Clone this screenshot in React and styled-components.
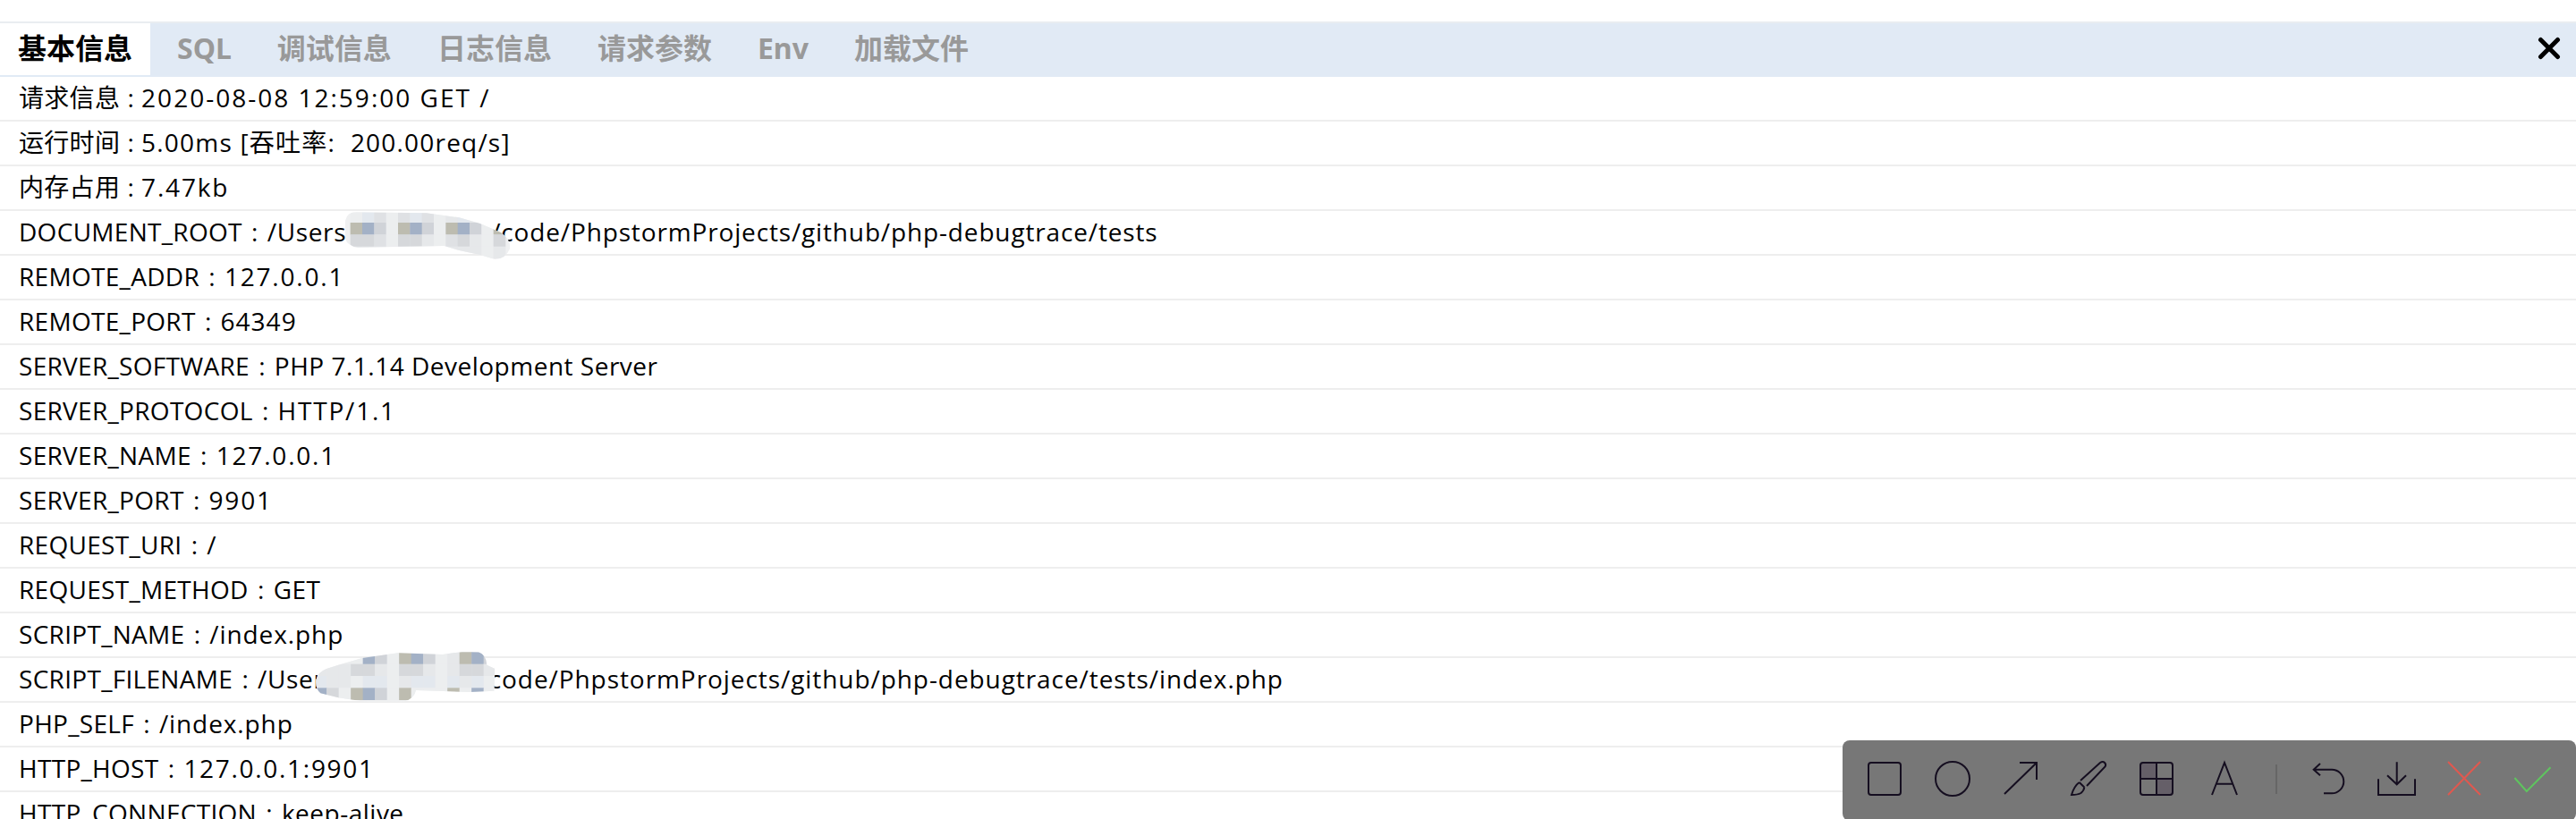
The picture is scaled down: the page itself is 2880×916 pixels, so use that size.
import React from 'react';
import styled, { createGlobalStyle } from 'styled-components';

const Global = createGlobalStyle`
  html, body { margin: 0; padding: 0; background: #fff; overflow: hidden; }
  #root { height: 916px; overflow: hidden; position: relative; }
`;
const Page = styled.div`
  padding-top: 24px;
  font-family: "Open Sans", "Noto Sans CJK SC", sans-serif;
  color: #000;
`;
const TabBar = styled.div`
  display: flex;
  align-items: stretch;
  height: 62px;
  box-sizing: border-box;
  border-top: 2px solid #e9edf1;
  border-bottom: 2px solid #e1eaf5;
  background: #e1eaf5;
`;
const Tab = styled.div`
  padding: 0 20px 3px 20px;
  margin-right: ${p => (p.$active ? 10 : 11)}px;
  display: flex;
  align-items: center;
  font-family: "Noto Sans", "Noto Sans CJK SC", sans-serif;
  font-size: 32px;
  font-weight: 700;
  line-height: 1;
  color: ${p => (p.$active ? '#000' : '#999')};
  background: ${p => (p.$active ? '#fff' : 'transparent')};
`;
const Close = styled.svg`
  margin-left: auto;
  margin-right: 16px;
  align-self: center;
  width: 28px;
  height: 28px;
`;
const Row = styled.div`
  height: 50px;
  box-sizing: border-box;
  padding-left: 21px;
  border-bottom: 2px solid #eee;
  font-size: 28px;
  line-height: 46px;
  white-space: pre;
`;
const Key = styled.span`
  letter-spacing: 0.3px;
`;
const Colon = styled.span`
  margin: 0 ${p => (p.$cjk ? 1 : 3)}px;
`;
const Value = styled.span`
  letter-spacing: ${p => p.$ls}px;
`;
const Redacted = styled.span`
  display: inline-block;
  width: ${p => p.$w}px;
`;
const Smudge = styled.svg`
  position: absolute;
  left: ${p => p.$x}px;
  top: ${p => p.$y}px;
`;
const Toolbar = styled.div`
  position: absolute;
  left: 2060px;
  top: 828px;
  width: 820px;
  height: 90px;
  box-sizing: border-box;
  padding: 0 0 4px 27px;
  display: flex;
  align-items: center;
  gap: 36px;
  background: #777;
  border-radius: 8px;
`;
const Tool = styled.svg`
  flex: none;
  width: 40px;
  height: 40px;
  overflow: visible;
  fill: none;
  stroke: ${p => p.$color || '#150e20'};
  stroke-width: 2;
`;
const Divider = styled.div`
  flex: none;
  width: 2px;
  height: 33px;
  margin: 0 1px;
  background: #666;
`;

const rows = [
  { k: '请求信息', cjk: true, v: '2020-08-08 12:59:00 GET /', ls: 2 },
  { k: '运行时间', cjk: true, v: '5.00ms [吞吐率:  200.00req/s]', ls: 1.2 },
  { k: '内存占用', cjk: true, v: '7.47kb', ls: 1.8 },
  { k: 'DOCUMENT_ROOT', v: '/Users', ls: 0.66, w: 162, rest: '/code/PhpstormProjects/github/php-debugtrace/tests', restLs: 0.85 },
  { k: 'REMOTE_ADDR', v: '127.0.0.1', ls: 1.8 },
  { k: 'REMOTE_PORT', v: '64349', ls: 1 },
  { k: 'SERVER_SOFTWARE', v: 'PHP 7.1.14 Development Server', ls: 0.5 },
  { k: 'SERVER_PROTOCOL', v: 'HTTP/1.1', ls: 1.8 },
  { k: 'SERVER_NAME', v: '127.0.0.1', ls: 1.8 },
  { k: 'SERVER_PORT', v: '9901', ls: 1.8 },
  { k: 'REQUEST_URI', v: '/', ls: 0 },
  { k: 'REQUEST_METHOD', v: 'GET', ls: 0.5 },
  { k: 'SCRIPT_NAME', v: '/index.php', ls: 0.9 },
  { k: 'SCRIPT_FILENAME', v: '/Users', ls: 0.66, w: 159, rest: '/code/PhpstormProjects/github/php-debugtrace/tests/index.php', restLs: 0.93 },
  { k: 'PHP_SELF', v: '/index.php', ls: 0.9 },
  { k: 'HTTP_HOST', v: '127.0.0.1:9901', ls: 1.7 },
  { k: 'HTTP_CONNECTION', v: 'keep-alive', ls: 0.5 },
];
const tabs = ['基本信息', 'SQL', '调试信息', '日志信息', '请求参数', 'Env', '加载文件'];

const T = '#bdbcb0', B = '#a3b1c6', G = '#d0d3d8', L = '#eceeef', A = '#dfe1e4', D = '#d6d8db', E = '#e6e8ea', F = '#e3e8ee';

const blobA = {
  x: 380, y: 230, w: 200, h: 66, id: 'blobA',
  clip: 'M18 50 Q24 22 55 22 L290 25 L400 40 L470 60 L540 90 Q575 115 570 145 Q555 180 520 180 L470 165 L400 150 L350 135 L60 140 Q25 135 18 110 Z',
  x0: 35, y0: 17, cols: 40,
  grid: [
    [L, F, A, L, A, F, A, L, E, F, E, L, E],
    [T, B, G, L, T, B, G, L, T, B, G, L, T],
    [D, D, A, L, D, D, E, L, A, D, E, L, D],
    [E, E, E, L, E, E, E, L, E, E, E, L, E],
  ],
};
const blobB = {
  x: 345, y: 722, w: 210, h: 68, id: 'blobB',
  clip: 'M25 115 Q30 90 60 78 L100 65 L180 42 L300 25 L450 30 L520 20 L570 22 Q595 30 598 65 L625 78 L622 152 L540 156 L360 150 Q355 178 320 188 L200 190 L100 175 L40 160 Q22 145 25 115 Z',
  x0: 20, y0: 22, cols: 40.5,
  grid: [
    [L, L, L, L, B, G, L, T, B, G, L, E, T, B, G, L],
    [E, E, E, D, D, E, L, D, D, E, L, E, D, D, E, L],
    [F, E, E, L, F, F, L, E, F, F, L, F, E, F, L, L],
    [B, D, L, T, B, G, L, T, L, L, L, T, L, B, L, L],
  ],
};

const Blob = ({ b }) => (
  <Smudge $x={b.x} $y={b.y} width={b.w} height={b.h} viewBox={`0 0 ${b.w * 3} ${b.h * 3}`}>
    <defs>
      <clipPath id={b.id}><path d={b.clip} /></clipPath>
      <filter id={`${b.id}f`}><feGaussianBlur stdDeviation="2" /></filter>
    </defs>
    <g clipPath={`url(#${b.id})`}>
      <rect width={b.w * 3} height={b.h * 3} fill="#eff0f1" />
      <g filter={`url(#${b.id}f)`}>
        {b.grid.map((r, j) => r.map((f, i) => (
          <rect key={`${i}-${j}`} x={b.x0 + i * b.cols} y={b.y0 + j * 40} width={b.cols + 1} height={41} fill={f} />
        )))}
      </g>
    </g>
  </Smudge>
);

export default function App() {
  return (
    <Page>
      <Global />
      <TabBar>
        {tabs.map((t, i) => <Tab key={t} $active={i === 0}>{t}</Tab>)}
        <Close viewBox="0 0 28 28">
          <path d="M4.5 3.5L23.5 22.5M23.5 3.5L4.5 22.5" stroke="#000" strokeWidth="5" strokeLinecap="round" fill="none" />
        </Close>
      </TabBar>
      {rows.map(({ k, cjk, v, ls, w, rest, restLs }) => (
        <Row key={k}>
          <Key>{k}</Key><Colon $cjk={cjk}> : </Colon><Value $ls={ls}>{v}</Value>
          {w ? <Redacted $w={w} /> : null}
          {rest ? <Value $ls={restLs}>{rest}</Value> : null}
        </Row>
      ))}
      <Blob b={blobA} />
      <Blob b={blobB} />
      <Toolbar>
        <Tool viewBox="0 0 40 40"><rect x="2" y="2" width="36" height="36" rx="3" /></Tool>
        <Tool viewBox="0 0 40 40"><circle cx="20" cy="20" r="19" /></Tool>
        <Tool viewBox="0 0 40 40"><path d="M2 37L38 2M19 2H38V21" /></Tool>
        <Tool viewBox="0 0 40 40">
          <path d="M11 22L33 2Q36 0 38 2Q40 4 38.5 6.5L18 28M9.7 24L15.3 29.5M9.7 24Q4 28 1 38Q8 38 11.5 36Q15 33 15.3 29.5" />
        </Tool>
        <Tool viewBox="0 0 40 40">
          <path d="M5 2H20V20H2V5Q2 2 5 2Z" fill="#655f68" stroke="none" />
          <path d="M20 20H38V35Q38 38 35 38H20Z" fill="#655f68" stroke="none" />
          <rect x="2" y="2" width="36" height="36" rx="3" />
          <path d="M20 2V38M2 20H38" />
        </Tool>
        <Tool viewBox="0 0 40 40"><path d="M6 38L20 2L34 38M11 25.7H29" /></Tool>
        <Divider />
        <Tool viewBox="0 0 40 40"><path d="M11 3L3.7 9.7L11 16.3M3.7 9.7H24A13.3 13.3 0 0 1 24 36.3H15" /></Tool>
        <Tool viewBox="0 0 40 40"><path d="M0 20.3V38H41V20.3M20.7 1.3V26.3M10 16.3L20.7 26.3L31 16.3" /></Tool>
        <Tool viewBox="0 0 40 40" $color="#e0584f"><path d="M2 1L38 38M38 1L2 38" /></Tool>
        <Tool viewBox="0 0 40 40" $color="#5fc45f"><path d="M0.4 19L13.8 34L40.5 7.3" /></Tool>
      </Toolbar>
    </Page>
  );
}
